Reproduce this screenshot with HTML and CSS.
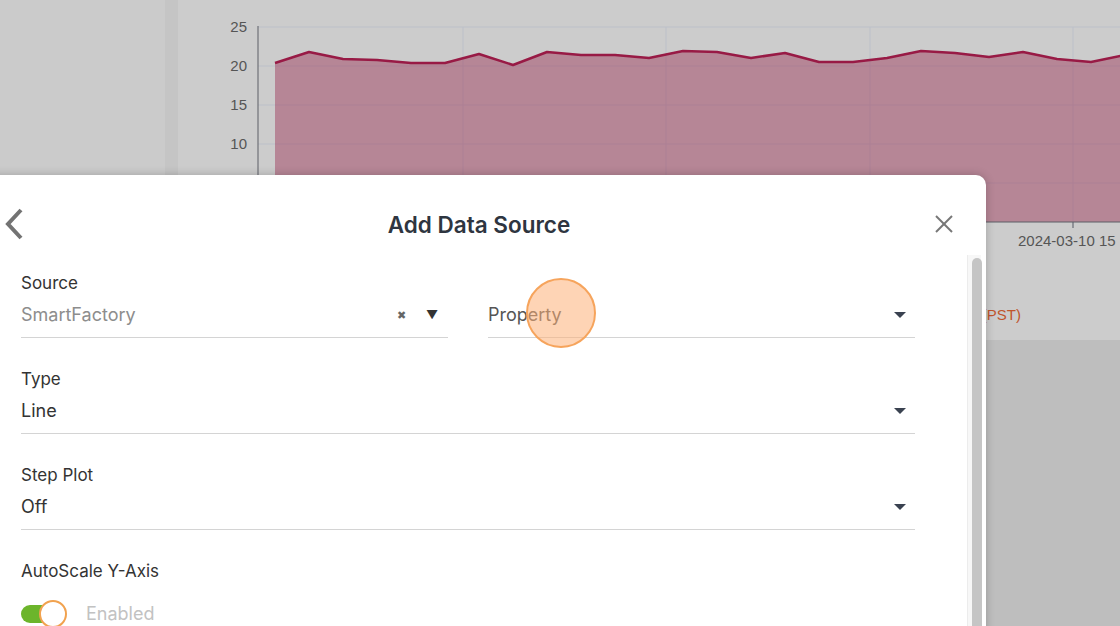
FILE: index.html
```html
<!DOCTYPE html>
<html lang="en">
<head>
    <meta charset="UTF-8">
    <meta name="viewport" content="width=device-width, initial-scale=1.0">
    <title>Add Data Source</title>
    <link rel="stylesheet" href="styles.css">
</head>
<body>

<div class="page">
    <div class="sidebar"></div>
    <div class="divider"></div>
    <div class="main">
        <svg class="chart" viewBox="178 0 942 340" width="942" height="340">
            <g class="grid">
                <line x1="258" y1="27" x2="1120" y2="27"/>
                <line x1="258" y1="66" x2="1120" y2="66"/>
                <line x1="258" y1="105" x2="1120" y2="105"/>
                <line x1="258" y1="144" x2="1120" y2="144"/>
                <line x1="258" y1="183" x2="1120" y2="183"/>
                <line x1="463" y1="27" x2="463" y2="228"/>
                <line x1="666" y1="27" x2="666" y2="228"/>
                <line x1="870" y1="27" x2="870" y2="228"/>
                <line x1="1073" y1="27" x2="1073" y2="228"/>
            </g>
            <polygon class="area" points="275,63 309,52 343,59 377,60 411,63 445,63 479,54 513,65 547,52 581,55 615,55 649,58 683,51 717,52 751,58 785,53 819,62 853,62 887,58 921,51 955,53 989,57 1023,52 1057,59 1091,62 1125,55 1125,222 275,222"/>
            <polyline class="series" points="275,63 309,52 343,59 377,60 411,63 445,63 479,54 513,65 547,52 581,55 615,55 649,58 683,51 717,52 751,58 785,53 819,62 853,62 887,58 921,51 955,53 989,57 1023,52 1057,59 1091,62 1125,55"/>
            <line class="axis" x1="258" y1="26" x2="258" y2="222"/>
            <line class="axis" x1="258" y1="222" x2="1120" y2="222"/>
            <line class="tick" x1="1073" y1="222" x2="1073" y2="228"/>
            <g class="ylabels">
                <text x="247" y="32">25</text>
                <text x="247" y="71">20</text>
                <text x="247" y="110">15</text>
                <text x="247" y="149">10</text>
                <text x="247" y="188">5</text>
            </g>
            <text class="xlabel" x="1018" y="246">2024-03-10 15</text>
            <text class="legend" x="1021" y="320">Temperature (PST)</text>
        </svg>
        <div class="lower"></div>
    </div>
</div>

<div class="modal">
    <div class="modal-header">
        <svg class="back" width="22" height="32" viewBox="0 0 22 32">
            <polyline points="18,2 5,16 18,30"/>
        </svg>
        <h2 class="modal-title">Add Data Source</h2>
        <svg class="close" width="22" height="22" viewBox="0 0 22 22">
            <line x1="3" y1="3" x2="19" y2="19"/>
            <line x1="19" y1="3" x2="3" y2="19"/>
        </svg>
    </div>

    <div class="modal-body">
        <div class="form">
            <div class="field-row">
                <div class="field">
                    <div class="label">Source</div>
                    <div class="value placeholder">
                        <span>SmartFactory</span>
                        <span class="clear">&#10006;</span>
                        <span class="arrow">&#9660;</span>
                    </div>
                </div>
                <div class="field">
                    <div class="label">&nbsp;</div>
                    <div class="value muted">
                        <span>Property</span>
                        <span class="caret"></span>
                    </div>
                </div>
            </div>

            <div class="field">
                <div class="label">Type</div>
                <div class="value">
                    <span>Line</span>
                    <span class="caret"></span>
                </div>
            </div>

            <div class="field">
                <div class="label">Step Plot</div>
                <div class="value">
                    <span>Off</span>
                    <span class="caret"></span>
                </div>
            </div>

            <div class="field">
                <div class="label">AutoScale Y-Axis</div>
                <div class="toggle-row">
                    <div class="toggle"><div class="knob"></div></div>
                    <span class="toggle-text">Enabled</span>
                </div>
            </div>
        </div>

        <div class="scrollbar"><div class="thumb"></div></div>
    </div>

    <div class="click-marker"></div>
</div>

</body>
</html>
```

FILE: styles.css
```css
body {
    margin: 0;
    padding: 0;
    font-family: 'Inter', 'Liberation Sans', sans-serif;
    background-color: #cccccc;
    overflow: hidden;
    width: 1120px;
    height: 626px;
    position: relative;
}

.page {
    display: flex;
    height: 626px;
}

.sidebar {
    width: 165px;
    background: linear-gradient(180deg, #cbcbcb 80%, #d1d1d1 100%);
}

.divider {
    width: 13px;
    background-color: #c5c5c5;
}

.main {
    flex: 1;
    display: flex;
    flex-direction: column;
}

.chart {
    display: block;
    background-color: #cccccc;
}

.grid line {
    stroke: #bcc0c9;
    stroke-width: 1;
}

.area {
    fill: rgba(150, 30, 70, 0.40);
}

.series {
    fill: none;
    stroke: #981a45;
    stroke-width: 2.5;
    stroke-linejoin: round;
}

.axis, .tick {
    stroke: #5c5f66;
    stroke-width: 1;
}

.ylabels text {
    font-family: 'Liberation Sans', sans-serif;
    font-size: 15px;
    fill: #555555;
    text-anchor: end;
}

.xlabel {
    font-family: 'Liberation Sans', sans-serif;
    font-size: 15px;
    fill: #555555;
}

.legend {
    font-family: 'Liberation Sans', sans-serif;
    font-size: 15px;
    fill: #c0552b;
    text-anchor: end;
}

.lower {
    flex: 1;
    background-color: #bebebe;
}

/* modal */
.modal {
    position: absolute;
    left: -30px;
    top: 175px;
    width: 1016px;
    height: 480px;
    background-color: #ffffff;
    border-radius: 10px;
    box-shadow: 0 0 10px rgba(0, 0, 0, 0.22);
}

.modal-header {
    height: 80px;
    display: flex;
    align-items: center;
    justify-content: space-between;
    padding: 18px 31px 0 33px;
    box-sizing: border-box;
}

.back polyline {
    fill: none;
    stroke: #737373;
    stroke-width: 4;
}

.close line {
    stroke: #777777;
    stroke-width: 2;
}

.modal-title {
    margin: 0;
    font-size: 22.5px;
    font-weight: 600;
    color: #2e3540;
}

.modal-body {
    display: flex;
    padding-left: 51px;
}

.form {
    width: 894px;
    padding-top: 18px;
}

.field-row {
    display: flex;
    gap: 40px;
}

.field-row .field {
    flex: 1;
}

.field {
    margin-bottom: 31px;
}

.label {
    font-size: 17px;
    line-height: 20px;
    color: #333333;
}

.value {
    display: flex;
    align-items: center;
    gap: 10px;
    font-size: 18px;
    line-height: 24px;
    color: #333333;
    padding: 10px 0;
    border-bottom: 1.5px solid #d4d4d4;
}

.value span:first-child {
    flex: 1;
}

.value.placeholder {
    gap: 17px;
    color: #8d8d8d;
}

.value.muted {
    color: #555555;
}

.clear {
    font-size: 11px;
    color: #666666;
    width: 14px;
    text-align: center;
}

.arrow {
    font-size: 12px;
    color: #333333;
    width: 14px;
    margin-right: 9px;
    text-align: center;
}

.caret {
    width: 0;
    height: 0;
    border-left: 6px solid transparent;
    border-right: 6px solid transparent;
    border-top: 6px solid #3a4250;
    margin-right: 9px;
}

.toggle-row {
    display: flex;
    align-items: center;
    gap: 20px;
    padding-top: 22px;
}

.toggle {
    width: 45px;
    height: 18px;
    border-radius: 9px;
    background-color: #6cb52b;
    display: flex;
    align-items: center;
    justify-content: flex-end;
}

.knob {
    width: 24px;
    height: 24px;
    border-radius: 50%;
    background-color: #ffffff;
    border: 2px solid #f1a24f;
    flex-shrink: 0;
    margin-right: -1px;
}

.toggle-text {
    font-size: 18px;
    color: #c2c2c2;
}

.scrollbar {
    width: 14px;
    margin-left: 52px;
    height: 400px;
    background-color: #f7f7f7;
    border-left: 1px solid #ececec;
    box-sizing: border-box;
    padding: 3px 0 0 4px;
}

.thumb {
    width: 10px;
    height: 380px;
    border-radius: 5px;
    background-color: #c5c5c5;
}

.click-marker {
    position: absolute;
    left: 556px;
    top: 103px;
    width: 66px;
    height: 66px;
    border-radius: 50%;
    background-color: rgba(253, 176, 120, 0.55);
    border: 2px solid #f6a45c;
}
```
